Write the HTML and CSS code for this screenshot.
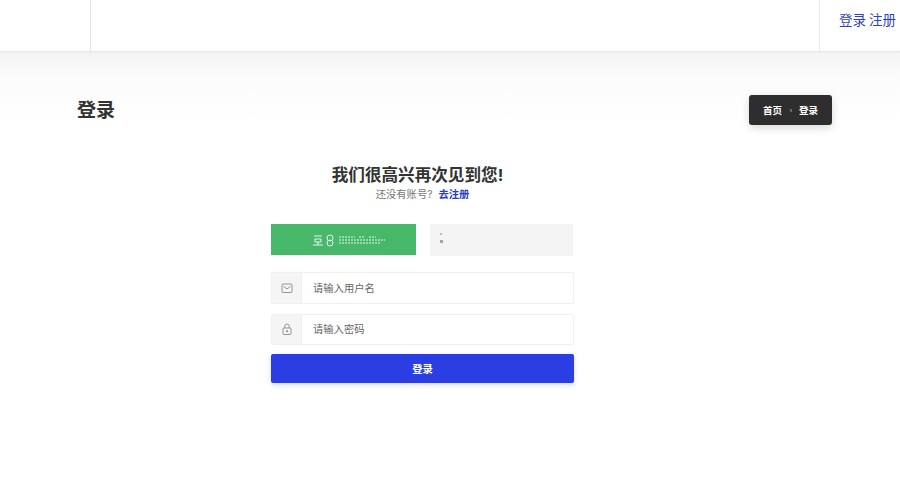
FILE: index.html
```html
<!DOCTYPE html>
<html lang="zh-CN">
<head>
  <meta charset="UTF-8">
  <meta name="viewport" content="width=device-width, initial-scale=1.0">
  <title>登录</title>
  <link rel="stylesheet" href="styles.css">
</head>
<body>
  <!-- 顶部导航 -->
  <header class="topbar">
    <div class="topbar-logo"></div>
    <div class="topbar-main"></div>
    <div class="topbar-user">
      <a href="#">登录</a>
      <a href="#">注册</a>
    </div>
  </header>

  <!-- 页面标题 -->
  <section class="page-title">
    <h1>登录</h1>
    <div class="breadcrumb">
      <span>首页</span>
      <i class="breadcrumb-sep"></i>
      <span>登录</span>
    </div>
  </section>

  <!-- 登录表单 -->
  <main class="login">
    <h2>我们很高兴再次见到您!</h2>
    <p class="login-sub">还没有账号? <a href="#">去注册</a></p>

    <div class="captcha-row">
      <div class="verify-banner">
        <svg width="74" height="14" viewBox="0 0 74 14" fill="none" stroke="#e6f6ea" stroke-width="1">
          <path d="M2 3h8M3 6h6v3H3zM1 12h10M6 9v3"/>
          <circle cx="18" cy="5" r="3"/>
          <circle cx="18" cy="10" r="3"/>
          <path d="M27 4h16M27 7h46M27 10h42M47 4h5M57 4h7" stroke-dasharray="2 1"/>
        </svg>
      </div>
      <div class="verify-box">
        <span class="verify-dot"></span>
        <span class="verify-arrow"></span>
      </div>
    </div>

    <form class="login-form">
      <div class="field">
        <span class="field-icon">
          <svg width="12" height="12" viewBox="0 0 12 12" fill="none" stroke="#8a8a8a" stroke-width="0.9">
            <rect x="1" y="2" width="10" height="8.5" rx="1"/>
            <path d="M2.5 4.5 6 6.8l3.5-2.3"/>
          </svg>
        </span>
        <input type="text" placeholder="请输入用户名">
      </div>
      <div class="field">
        <span class="field-icon">
          <svg width="12" height="12" viewBox="0 0 12 12" fill="none" stroke="#8a8a8a" stroke-width="0.9">
            <rect x="2" y="5" width="8" height="6.5" rx="1"/>
            <path d="M3.8 5V3.2a2.2 2.2 0 0 1 4.4 0V5"/>
            <circle cx="6" cy="8.2" r="0.7" fill="#8a8a8a"/>
          </svg>
        </span>
        <input type="password" class="field-pass" placeholder="请输入密码">
      </div>
      <button type="button">登录</button>
    </form>
  </main>
</body>
</html>
```

FILE: styles.css
```css
:root {
  --primary-color: #2a3ee4;
  --link-color: #2c3fc0;
  --text-color: #333;
  --muted-color: #777;
  --font-family: 'Inter', 'Noto Sans CJK SC', sans-serif;
}
* {
  box-sizing: border-box;
}
html, body {
  height: 100%;
}
body {
  margin: 0;
  background-color: #fff;
  color: var(--text-color);
  font-family: var(--font-family);
  overflow: hidden;
}
a {
  text-decoration: none;
}
.topbar {
  position: relative;
  display: flex;
  height: 51px;
  background-color: #fff;
  box-shadow: 0 1px 2px rgba(0, 0, 0, 0.08);
}
.topbar-logo {
  width: 91px;
  border-right: 1px solid #e2e2e2;
}
.topbar-main {
  flex: 1;
}
.topbar-user {
  display: flex;
  gap: 3px;
  width: 81px;
  padding: 10px 0 0 19px;
  border-left: 1px solid #e8e8e8;
  font-size: 13.5px;
  line-height: 20px;
  white-space: nowrap;
}
.topbar-user a {
  color: var(--link-color);
}
.page-title {
  display: flex;
  align-items: flex-start;
  justify-content: space-between;
  height: 74px;
  padding: 44px 68px 0 77px;
  background: linear-gradient(to bottom, #f4f4f4, #fbfbfb 35%, #fff);
}
.page-title h1 {
  margin: 0;
  font-size: 19px;
  line-height: 32px;
  font-weight: 700;
}
.breadcrumb {
  display: flex;
  align-items: center;
  justify-content: space-between;
  width: 83px;
  height: 30px;
  padding: 0 14px;
  background-color: #2e2e2e;
  border-radius: 3px;
  box-shadow: 0 3px 8px rgba(0, 0, 0, 0.15);
  color: #fff;
  font-size: 9.5px;
  font-weight: 700;
}
.breadcrumb-sep {
  width: 2px;
  height: 3px;
  background-color: #666;
}
.login {
  width: 303px;
  margin-left: 271px;
  padding-top: 39px;
}
.login h2 {
  margin: 0;
  padding-right: 10px;
  font-size: 16.6px;
  line-height: 22px;
  font-weight: 700;
  text-align: center;
  white-space: nowrap;
}
.login-sub {
  margin: 0;
  font-size: 10.3px;
  line-height: 16px;
  color: var(--muted-color);
  text-align: center;
}
.login-sub a {
  margin-left: 3px;
  color: var(--link-color);
  font-weight: 700;
}
.captcha-row {
  display: flex;
  justify-content: space-between;
  margin-top: 22px;
  padding-right: 1px;
}
.verify-banner {
  display: flex;
  align-items: center;
  justify-content: center;
  width: 145px;
  height: 31px;
  padding-left: 10px;
  background-color: #47b76a;
}
.verify-box {
  display: flex;
  flex-direction: column;
  gap: 5px;
  width: 143px;
  height: 32px;
  padding: 9px 0 0 10px;
  background-color: #f4f4f4;
}
.verify-dot {
  width: 2px;
  height: 2px;
  background-color: #bbb;
}
.verify-arrow {
  width: 3px;
  height: 3px;
  background-color: #a5a5a5;
}
.login-form {
  margin-top: 16px;
}
.field {
  display: flex;
  height: 31.5px;
  margin-bottom: 10px;
  background-color: #fff;
  border: 1px solid #f0f0f0;
  border-radius: 2px;
}
.field-icon {
  display: flex;
  align-items: center;
  justify-content: center;
  width: 30px;
  background-color: #f5f5f5;
  border-right: 1px solid #eee;
}
.field input {
  flex: 1;
  min-width: 0;
  padding: 0 11px;
  border: none;
  outline: none;
  background: transparent;
  font-family: var(--font-family);
  font-size: 10.3px;
}
.field input::placeholder {
  color: #666;
  opacity: 1;
}
.login-form button {
  display: block;
  width: 100%;
  height: 29px;
  margin-top: -1px;
  border: none;
  border-radius: 2px;
  background-color: var(--primary-color);
  box-shadow: 0 2px 5px rgba(42, 61, 232, 0.2);
  color: #fff;
  font-family: var(--font-family);
  font-size: 10.3px;
  font-weight: 700;
}
```
